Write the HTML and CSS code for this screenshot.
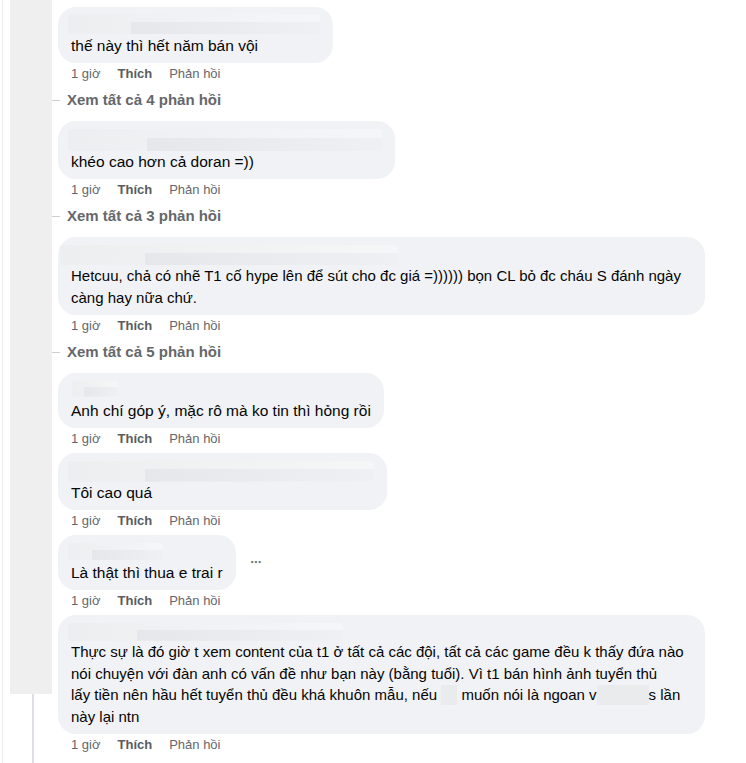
FILE: index.html
```html
<!DOCTYPE html>
<html lang="vi">
<head>
    <meta charset="UTF-8">
    <meta name="viewport" content="width=device-width, initial-scale=1.0">
    <title>Bình luận</title>
    <link rel="stylesheet" href="styles.css">
</head>
<body>
    <div class="page">
        <div class="rail">
            <div class="rail-block"></div>
            <div class="rail-line"></div>
        </div>

        <div class="thread">
            <div class="comment">
                <div class="bubble">
                    <div class="name n1"></div>
                    <div class="text">thế này thì hết năm bán vội</div>
                </div>
                <div class="actions"><span>1 giờ</span><b>Thích</b><span>Phản hồi</span></div>
            </div>
            <div class="more">Xem tất cả 4 phản hồi</div>

            <div class="comment">
                <div class="bubble">
                    <div class="name n2"></div>
                    <div class="text">khéo cao hơn cả doran =))</div>
                </div>
                <div class="actions"><span>1 giờ</span><b>Thích</b><span>Phản hồi</span></div>
            </div>
            <div class="more">Xem tất cả 3 phản hồi</div>

            <div class="comment">
                <div class="bubble">
                    <div class="name n3"></div>
                    <div class="text long">Hetcuu, chả có nhẽ T1 cố hype lên để sút cho đc giá =)))))) bọn CL bỏ đc cháu S đánh ngày càng hay nữa chứ.</div>
                </div>
                <div class="actions"><span>1 giờ</span><b>Thích</b><span>Phản hồi</span></div>
            </div>
            <div class="more">Xem tất cả 5 phản hồi</div>

            <div class="comment">
                <div class="bubble">
                    <div class="name n4"></div>
                    <div class="text">Anh chí góp ý, mặc rô mà ko tin thì hỏng rồi</div>
                </div>
                <div class="actions"><span>1 giờ</span><b>Thích</b><span>Phản hồi</span></div>
            </div>

            <div class="comment">
                <div class="bubble">
                    <div class="name n5"></div>
                    <div class="text">Tôi cao quá</div>
                </div>
                <div class="actions"><span>1 giờ</span><b>Thích</b><span>Phản hồi</span></div>
            </div>

            <div class="comment">
                <div class="bubble-row">
                    <div class="bubble">
                        <div class="name n6"></div>
                        <div class="text">Là thật thì thua e trai r</div>
                    </div>
                    <span class="dots">•••</span>
                </div>
                <div class="actions"><span>1 giờ</span><b>Thích</b><span>Phản hồi</span></div>
            </div>

            <div class="comment">
                <div class="bubble">
                    <div class="name n7"></div>
                    <div class="text long">Thực sự là đó giờ t xem content của t1 ở tất cả các đội, tất cả các game đều k thấy đứa nào nói chuyện với đàn anh có vấn đề như bạn này (bằng tuổi). Vì t1 bán hình ảnh tuyển thủ<br>lấy tiền nên hầu hết tuyển thủ đều khá khuôn mẫu, nếu <span class="hide"></span> muốn nói là ngoan v<span class="hide wide"></span>s lần<br>này lại ntn</div>
                </div>
                <div class="actions"><span>1 giờ</span><b>Thích</b><span>Phản hồi</span></div>
            </div>
        </div>
    </div>
</body>
</html>
```

FILE: styles.css
```css
body {
    margin: 0;
    background: #fff;
    font-family: "Liberation Sans", Arial, sans-serif;
    color: #050505;
}
.page {
    display: flex;
    min-height: 763px;
}
.rail {
    width: 42px;
    margin-left: 2px;
    padding-left: 7px;
    border-left: 1px solid #ececec;
    display: flex;
    flex-direction: column;
    flex: none;
}
.rail-block {
    height: 694px;
    background: #efefef;
}
.rail-line {
    flex: 1;
    width: 2px;
    margin-left: 22px;
    background: #dcdfe3;
}
.thread {
    padding: 7px 0 0 6px;
}
.bubble {
    display: inline-block;
    max-width: 647px;
    box-sizing: border-box;
    padding: 8px 13px 7px;
    background: #f0f2f5;
    border-radius: 18px;
}
.bubble-row {
    display: flex;
    align-items: center;
}
.dots {
    margin-left: 15px;
    margin-top: -3px;
    font-size: 8px;
    letter-spacing: 1px;
    color: #65676b;
}
.name {
    height: 20px;
    margin-left: -3px;
    border-radius: 3px;
    background:
        linear-gradient(90deg, #e6e7ea, #eef0f3) right bottom / 75% 60% no-repeat,
        linear-gradient(90deg, #eceef0, #f5f6f7);
}
.n1 { width: 252px; margin-top: -1px; margin-bottom: 1px; }
.n2 { width: 314px; height: 22px; }
.n3 { width: 338px; margin-left: -11px; }
.n4 { width: 46px; margin-left: 1px; height: 16px; margin-bottom: 3px; }
.n5 { width: 306px; height: 21px; }
.n6 { width: 95px; height: 17px; margin-bottom: 2px; }
.n7 { width: 275px; height: 18px; }
.text {
    font-size: 15.5px;
    line-height: 21px;
}
.text.long {
    font-size: 15px;
    line-height: 21.5px;
}
.hide {
    display: inline-block;
    width: 16px;
    height: 20px;
    vertical-align: -5px;
    background: #eaebed;
}
.hide.wide {
    width: 52px;
}
.actions {
    display: flex;
    gap: 17px;
    margin: 3px 0 6px 13px;
    font-size: 13px;
    line-height: 16px;
    color: #65676b;
}
.actions b {
    color: #5a5c60;
}
.more {
    display: flex;
    align-items: center;
    gap: 7px;
    margin: 8px 0 11px -6px;
    font-size: 15px;
    font-weight: bold;
    line-height: 20px;
    color: #65676b;
}
.more::before {
    content: "";
    width: 8px;
    height: 1px;
    background: #ccd0d5;
}
```
